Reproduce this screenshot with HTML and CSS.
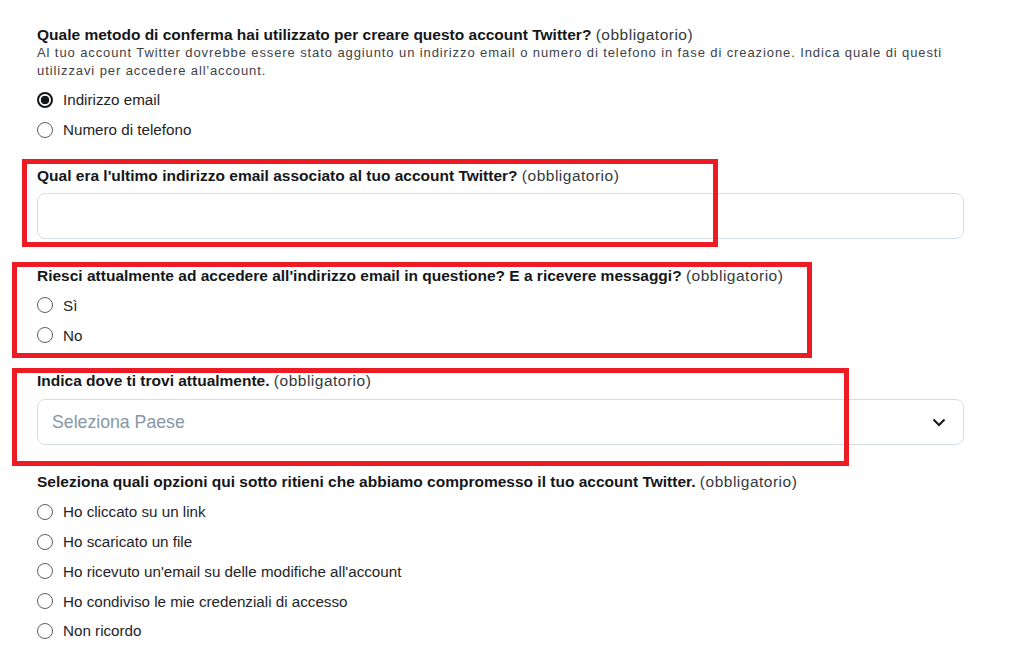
FILE: index.html
```html
<!DOCTYPE html>
<html lang="it">
<head>
    <meta charset="UTF-8">
    <title>Modulo account Twitter</title>
    <link rel="stylesheet" href="styles.css">
</head>
<body>
    <div class="page">
        <form class="form">
            <!-- Metodo di conferma -->
            <div class="question q-method">
                <div class="label"><b>Quale metodo di conferma hai utilizzato per creare questo account Twitter?</b> <span class="req">(obbligatorio)</span></div>
                <p class="hint">Al tuo account Twitter dovrebbe essere stato aggiunto un indirizzo email o numero di telefono in fase di creazione. Indica quale di questi utilizzavi per accedere all'account.</p>
                <div class="options">
                    <div class="option"><span class="radio checked"></span>Indirizzo email</div>
                    <div class="option"><span class="radio"></span>Numero di telefono</div>
                </div>
            </div>

            <!-- Ultimo indirizzo email -->
            <div class="question q-input">
                <div class="label"><b>Qual era l'ultimo indirizzo email associato al tuo account Twitter?</b> <span class="req">(obbligatorio)</span></div>
                <div class="text-input"></div>
            </div>

            <!-- Accesso email -->
            <div class="question">
                <div class="label"><b>Riesci attualmente ad accedere all'indirizzo email in questione? E a ricevere messaggi?</b> <span class="req">(obbligatorio)</span></div>
                <div class="options">
                    <div class="option"><span class="radio"></span>Sì</div>
                    <div class="option"><span class="radio"></span>No</div>
                </div>
            </div>

            <!-- Paese -->
            <div class="question q-input">
                <div class="label"><b>Indica dove ti trovi attualmente.</b> <span class="req">(obbligatorio)</span></div>
                <div class="select">
                    <span class="placeholder">Seleziona Paese</span>
                    <svg class="chevron" width="14" height="9" viewBox="0 0 14 9">
                        <path d="M1.5 1.5 L7 7 L12.5 1.5" fill="none" stroke="#14171a" stroke-width="2"/>
                    </svg>
                </div>
            </div>

            <!-- Compromissione -->
            <div class="question">
                <div class="label"><b>Seleziona quali opzioni qui sotto ritieni che abbiamo compromesso il tuo account Twitter.</b> <span class="req">(obbligatorio)</span></div>
                <div class="options">
                    <div class="option"><span class="radio"></span>Ho cliccato su un link</div>
                    <div class="option"><span class="radio"></span>Ho scaricato un file</div>
                    <div class="option"><span class="radio"></span>Ho ricevuto un'email su delle modifiche all'account</div>
                    <div class="option"><span class="radio"></span>Ho condiviso le mie credenziali di accesso</div>
                    <div class="option"><span class="radio"></span>Non ricordo</div>
                </div>
            </div>
        </form>

        <!-- Riquadri rossi di evidenziazione -->
        <div class="mark mark-1"></div>
        <div class="mark mark-2"></div>
        <div class="mark mark-3"></div>
    </div>
</body>
</html>
```

FILE: styles.css
```css
html, body {
    margin: 0;
    background: #ffffff;
}

body {
    font-family: "Liberation Sans", Arial, sans-serif;
    color: #14171a;
}

.page {
    position: relative;
    width: 1024px;
    height: 664px;
    overflow: hidden;
}

.form {
    width: 927px;
    padding: 26px 0 0 37px;
}

.question {
    margin-bottom: 22px;
}

.q-input {
    margin-bottom: 28px;
}

.label {
    font-size: 15.5px;
    line-height: 18px;
    color: #333a40;
    white-space: nowrap;
}

.label b {
    color: #14171a;
}

.req {
    letter-spacing: 0.5px;
}

.hint {
    margin: 0 0 5px 0;
    font-size: 13px;
    line-height: 18px;
    letter-spacing: 0.9px;
    color: #3c4248;
}

.options {
    margin-top: 6px;
}

.q-method .options {
    margin-top: 0;
}

.option {
    display: flex;
    align-items: center;
    height: 29.75px;
    font-size: 15.2px;
    color: #1f2428;
}

/* Pulsante radio disegnato */
.radio {
    box-sizing: border-box;
    width: 16px;
    height: 16px;
    border: 1px solid #5a5f64;
    border-radius: 50%;
    margin-right: 10px;
    flex-shrink: 0;
}

.radio.checked {
    border: 2px solid #14171a;
    background: radial-gradient(circle, #14171a 0 4px, #ffffff 4.6px);
}

.text-input {
    box-sizing: border-box;
    margin-top: 8px;
    height: 46px;
    border: 1px solid #d6dee5;
    border-radius: 8px;
}

.select {
    box-sizing: border-box;
    margin-top: 9px;
    height: 46px;
    border: 1px solid #d6dee5;
    border-radius: 8px;
    display: flex;
    align-items: center;
    justify-content: space-between;
    padding: 0 17px 0 14px;
}

.placeholder {
    font-size: 17.7px;
    color: #8797a5;
}

/* Riquadri di annotazione sopra il modulo */
.mark {
    position: absolute;
    box-sizing: border-box;
    border: 5px solid #ed1c24;
}

.mark-1 {
    left: 22px;
    top: 159px;
    width: 696px;
    height: 88px;
}

.mark-2 {
    left: 12px;
    top: 262px;
    width: 800px;
    height: 96px;
}

.mark-3 {
    left: 12px;
    top: 368px;
    width: 837px;
    height: 98px;
}
```
